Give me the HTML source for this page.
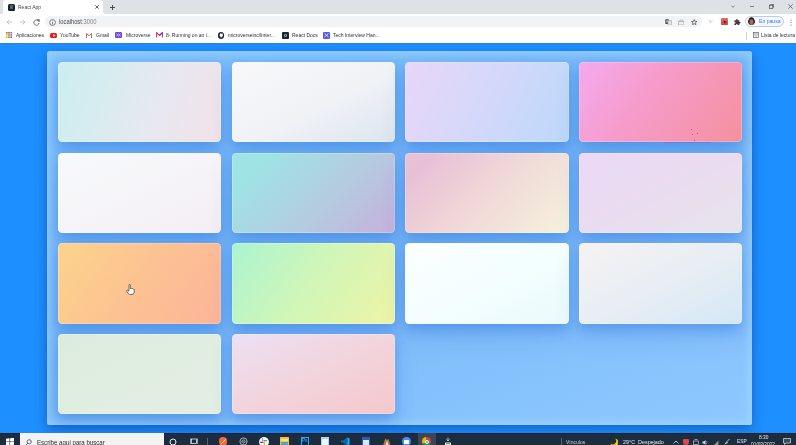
<!DOCTYPE html>
<html><head><meta charset="utf-8">
<style>
*{margin:0;padding:0;box-sizing:border-box}
html,body{width:796px;height:445px;overflow:hidden;background:#1e8fff;font-family:"Liberation Sans",sans-serif}
.abs{position:absolute}
#tabs{left:0;top:0;width:796px;height:14px;background:#dee1e6}
#tab{left:3px;top:0;width:100px;height:14px;background:#fff;border-radius:3px 3px 0 0}
#addr{left:0;top:14px;width:796px;height:15px;background:#fff}
#omni{left:45px;top:16px;width:657px;height:11px;background:#f1f3f4;border-radius:6px}
#bm{left:0;top:29px;width:796px;height:13.6px;background:#fff}
.t{position:absolute;white-space:nowrap;color:#2e3135;line-height:1;transform:scaleY(1.15);transform-origin:0 50%;will-change:transform}
#page{left:0;top:43px;width:796px;height:390px;background:#1e8fff}
#panel{left:47px;top:51px;width:705.2px;height:373.5px;border-radius:2.5px;
  background:linear-gradient(160deg,#7cbffc 0%,#76b8f8 45%,#8fc8ff 100%);
  box-shadow:0 4px 12px rgba(0,40,120,.42), inset 0 0 8px 3px rgba(170,222,255,.55)}
.card{position:absolute;width:163.4px;height:80.4px;border-radius:4.5px;box-shadow:inset 0 0 0 0.8px rgba(255,255,255,.3),0 6px 12px rgba(0,80,210,.24),0 14px 26px rgba(0,70,190,.13)}
#taskbar{left:0;top:432.8px;width:796px;height:13px;background:#1c2d40;border-top:1px solid #132030}
</style></head><body>
<div id="tabs" class="abs"></div>
<div id="tab" class="abs"></div>
<div class="abs" style="left:100px;top:11px;width:6px;height:3px;background:#fff"></div>
<div class="abs" style="left:103px;top:8px;width:6px;height:6px;background:#dee1e6;border-bottom-left-radius:3px"></div>
<div class="abs" style="left:8px;top:3.5px;width:7px;height:7px;background:#20232a;border-radius:1.5px"></div>
<div class="abs" style="left:9.8px;top:5.3px;width:3.6px;height:3.6px;background:#3f6e7c;border-radius:0.5px"></div>
<div class="t" style="left:18px;top:5px;font-size:5px;color:#45484c">React App</div>
<svg class="abs" style="left:94.5px;top:5px" width="4" height="4" viewBox="0 0 4 4"><path d="M0.3 0.3L3.7 3.7M3.7 0.3L0.3 3.7" stroke="#3c4043" stroke-width="0.8"/></svg>
<svg class="abs" style="left:110px;top:4.5px" width="5" height="5" viewBox="0 0 5 5"><path d="M2.5 0V5M0 2.5H5" stroke="#3c4043" stroke-width="0.9"/></svg>
<svg class="abs" style="left:731px;top:4.5px" width="4" height="3" viewBox="0 0 4 3"><path d="M0.2 0.5L2 2.4L3.8 0.5" stroke="#4a4e52" stroke-width="0.6" fill="none"/></svg>
<div class="abs" style="left:749.5px;top:5.8px;width:4.5px;height:0.7px;background:#7a7e83"></div>
<svg class="abs" style="left:768.5px;top:3.8px" width="5" height="5" viewBox="0 0 5 5"><rect x="0.4" y="1.2" width="3.4" height="3.4" stroke="#3c4043" stroke-width="0.65" fill="none"/><path d="M1.2 0.4H4.6V3.8" stroke="#3c4043" stroke-width="0.65" fill="none"/></svg>
<svg class="abs" style="left:788px;top:4px" width="5" height="5" viewBox="0 0 5 5"><path d="M0.3 0.3L4.7 4.7M4.7 0.3L0.3 4.7" stroke="#3c4043" stroke-width="0.65"/></svg>

<div id="addr" class="abs"></div>
<svg class="abs" style="left:6px;top:18.5px" width="7" height="6" viewBox="0 0 7 6"><path d="M6.5 3H1M3.5 0.5L1 3L3.5 5.5" stroke="#b6b9bd" stroke-width="0.8" fill="none"/></svg>
<svg class="abs" style="left:19px;top:18.5px" width="7" height="6" viewBox="0 0 7 6"><path d="M0.5 3H6M3.5 0.5L6 3L3.5 5.5" stroke="#b6b9bd" stroke-width="0.8" fill="none"/></svg>
<svg class="abs" style="left:32.5px;top:18.5px" width="7" height="7" viewBox="0 0 7 7"><path d="M5.6 2.2A2.6 2.6 0 1 0 6 4" stroke="#5f6368" stroke-width="0.9" fill="none"/><path d="M4 0.6H6.3V2.9Z" fill="#5f6368" stroke="#5f6368" stroke-width="0.5"/></svg>
<div id="omni" class="abs"></div>
<svg class="abs" style="left:49px;top:18.5px" width="7" height="7" viewBox="0 0 7 7"><circle cx="3.5" cy="3.5" r="2.9" stroke="#5f6368" stroke-width="0.8" fill="none"/><path d="M3.5 3V5.3" stroke="#5f6368" stroke-width="0.8"/><circle cx="3.5" cy="1.9" r="0.45" fill="#5f6368"/></svg>
<div class="t" style="left:59px;top:19.5px;font-size:5.8px;color:#45484c">localhost<span style="color:#80858a">:3000</span></div>
<svg class="abs" style="left:664.5px;top:18.8px" width="7" height="6.5" viewBox="0 0 7 6.5"><rect x="0.3" y="0.3" width="3.6" height="4.6" rx="0.4" fill="#4a4e52"/><rect x="3" y="1.6" width="3.6" height="4.6" rx="0.4" fill="#e4e6e8" stroke="#8a8e92" stroke-width="0.5"/><path d="M1.1 3.6L2.1 1.2L3 3.6" stroke="#fff" stroke-width="0.5" fill="none"/></svg>
<svg class="abs" style="left:677.8px;top:18.8px" width="6.5" height="6.5" viewBox="0 0 6.5 6.5"><path d="M0.5 2.6H6V6H0.5Z" stroke="#8e9297" stroke-width="0.6" fill="none"/><path d="M1.2 2.6L2 0.8L3.2 1.8L4.4 0.8L5.4 2.6" stroke="#8e9297" stroke-width="0.55" fill="none"/></svg>
<svg class="abs" style="left:691.4px;top:18.8px" width="6.5" height="6.5" viewBox="0 0 7 7"><path d="M3.5 0.6L4.3 2.6L6.4 2.7L4.8 4L5.3 6.2L3.5 5L1.7 6.2L2.2 4L0.6 2.7L2.7 2.6Z" stroke="#3c4043" stroke-width="0.7" fill="none" stroke-linejoin="round"/></svg>
<svg class="abs" style="left:708.3px;top:18.6px" width="6" height="6" viewBox="0 0 6 6"><path d="M0.6 0.6L2.2 5L2.8 3.2L4.6 2.6Z" fill="#d4d6d9"/><path d="M4 0.4V1.4M5.4 1.8H4.6" stroke="#c4c7ca" stroke-width="0.5"/></svg>
<div class="abs" style="left:721px;top:18.4px;width:7px;height:7px;background:linear-gradient(#e86a6a,#cf4545);border-radius:0.8px"></div><svg class="abs" style="left:722.5px;top:19.8px" width="4.5" height="4.5" viewBox="0 0 5 5"><path d="M0.6 0.6L4.2 2.2L2.6 2.7L2 4.3Z" fill="#2a0808"/></svg>
<svg class="abs" style="left:734.3px;top:18.6px" width="6.6" height="6.6" viewBox="1 1 22 22"><path d="M20.5 11H19V7c0-1.1-.9-2-2-2h-4V3.5C13 2.12 11.88 1 10.5 1S8 2.12 8 3.5V5H4c-1.1 0-1.99.9-1.99 2v3.8H3.5c1.49 0 2.7 1.21 2.7 2.7s-1.21 2.7-2.7 2.7H2V20c0 1.1.9 2 2 2h3.8v-1.5c0-1.490 1.21-2.7 2.7-2.7 1.49 0 2.7 1.21 2.7 2.7V22H17c1.1 0 2-.9 2-2v-4h1.5c1.38 0 2.5-1.12 2.5-2.5S21.88 11 20.5 11z" fill="#3c4043"/></svg>
<div class="abs" style="left:745px;top:16px;width:38.5px;height:10.8px;border-radius:6px;border:0.8px solid #b4cdf2;background:#f4f8fe"></div>
<div class="abs" style="left:748.4px;top:17.4px;width:7px;height:8px;border-radius:50%;background:radial-gradient(ellipse at 50% 62%,#a87058 0 28%,#3a2418 48%,#2a1a12 62%,#e6e2e0 72%)"></div>
<div class="t" style="left:759px;top:19px;font-size:5.1px;color:#3f78d6">En pausa</div>
<svg class="abs" style="left:790px;top:18.5px" width="2" height="7" viewBox="0 0 2 7"><circle cx="1" cy="1" r="0.6" fill="#5f6368"/><circle cx="1" cy="3.5" r="0.6" fill="#5f6368"/><circle cx="1" cy="6" r="0.6" fill="#5f6368"/></svg>

<div id="bm" class="abs"></div>
<svg class="abs" style="left:6px;top:32px" width="6" height="6" viewBox="0 0 6 6"><rect x="0" y="0" width="1.6" height="1.6" fill="#ea4335"/><rect x="2.2" y="0" width="1.6" height="1.6" fill="#ea4335"/><rect x="4.4" y="0" width="1.6" height="1.6" fill="#4285f4"/><rect x="0" y="2.2" width="1.6" height="1.6" fill="#fbbc04"/><rect x="2.2" y="2.2" width="1.6" height="1.6" fill="#34a853"/><rect x="4.4" y="2.2" width="1.6" height="1.6" fill="#4285f4"/><rect x="0" y="4.4" width="1.6" height="1.6" fill="#fbbc04"/><rect x="2.2" y="4.4" width="1.6" height="1.6" fill="#34a853"/><rect x="4.4" y="4.4" width="1.6" height="1.6" fill="#ea4335"/></svg>
<div class="t" style="left:16px;top:33px;font-size:5px">Aplicaciones</div>
<div class="abs" style="left:50px;top:32.6px;width:7px;height:5px;background:#e62117;border-radius:1.5px"></div>
<svg class="abs" style="left:52.5px;top:33.8px" width="3" height="3" viewBox="0 0 3 3"><path d="M0.3 0.2L2.6 1.5L0.3 2.8Z" fill="#fff"/></svg>
<div class="t" style="left:60px;top:33px;font-size:5px">YouTube</div>
<svg class="abs" style="left:86px;top:32.6px" width="6" height="5" viewBox="0 0 6 5"><path d="M0.4 4.8V0.6L3 2.6L5.6 0.6V4.8" stroke="#ea4335" stroke-width="0.9" fill="none"/><path d="M0.4 4.8V1.5" stroke="#4285f4" stroke-width="0.9"/><path d="M5.6 4.8V1.5" stroke="#34a853" stroke-width="0.9"/></svg>
<div class="t" style="left:96px;top:33px;font-size:5px">Gmail</div>
<div class="abs" style="left:115px;top:32px;width:7px;height:6px;background:#6b4bd8;border-radius:1px"></div>
<svg class="abs" style="left:116px;top:33px" width="5" height="4" viewBox="0 0 5 4"><path d="M0.5 0.5L2.5 3.5L4.5 0.5M0.5 3.5L2.5 0.5L4.5 3.5" stroke="#e8e0ff" stroke-width="0.5" fill="none"/></svg>
<div class="t" style="left:126px;top:33px;font-size:5px">Microverse</div>
<svg class="abs" style="left:156px;top:32px" width="7" height="6" viewBox="0 0 7 6"><path d="M0.6 5.6V0.6L3.5 3.5L6.4 0.6V5.6" stroke="#d6336c" stroke-width="1.1" fill="none"/><path d="M3.5 3.5L6.4 0.6" stroke="#5b3fd9" stroke-width="1.1"/></svg>
<div class="t" style="left:166px;top:33px;font-size:5px">8- Running on an i...</div>
<div class="abs" style="left:217.5px;top:32px;width:6.5px;height:6.5px;border-radius:50%;background:#24292f"></div>
<svg class="abs" style="left:218.5px;top:33px" width="4.5" height="4.5" viewBox="0 0 5 5"><path d="M1.5 4.6V3.6C1 3.5 0.6 3 0.7 2.2C0.8 1.5 1.1 1.2 1.1 1.2C1 0.9 1.1 0.5 1.2 0.4C1.6 0.5 1.9 0.7 2.1 0.8H2.9C3.1 0.7 3.4 0.5 3.8 0.4C3.9 0.5 4 0.9 3.9 1.2C3.9 1.2 4.2 1.5 4.3 2.2C4.4 3 4 3.5 3.5 3.6V4.6Z" fill="#fff"/></svg>
<div class="t" style="left:228px;top:33px;font-size:5px">microverseinc/linter...</div>
<div class="abs" style="left:282px;top:32px;width:7px;height:6.5px;background:#20232a;border-radius:1px"></div>
<div class="abs" style="left:284px;top:34px;width:3px;height:2.5px;border:0.5px solid #61dafb;border-radius:50%;opacity:.8"></div>
<div class="t" style="left:292px;top:33px;font-size:5px">React Docs</div>
<div class="abs" style="left:323px;top:32px;width:7px;height:6.5px;background:#5b5be8;border-radius:1px"></div>
<svg class="abs" style="left:324px;top:33px" width="5" height="4.5" viewBox="0 0 5 4.5"><path d="M0.5 0.5L4.5 4M4.5 0.5L0.5 4" stroke="#fff" stroke-width="0.7"/></svg>
<div class="t" style="left:333px;top:33px;font-size:5px">Tech Interview Han...</div>
<div class="abs" style="left:746px;top:31.5px;width:0.7px;height:8px;background:#d0d2d5"></div>
<svg class="abs" style="left:752.5px;top:32px" width="6" height="6" viewBox="0 0 6 6"><rect x="0.4" y="0.4" width="5.2" height="5.2" stroke="#5f6368" stroke-width="0.7" fill="none"/><path d="M3 0.4V5.6M1.2 1.8H2.3M1.2 3H2.3M3.7 1.8H4.8M3.7 3H4.8" stroke="#5f6368" stroke-width="0.5"/></svg>
<div class="t" style="left:761px;top:33px;font-size:5px">Lista de lectura</div>

<div id="page" class="abs"></div>
<div class="abs" style="left:0;top:42.6px;width:796px;height:1px;background:#3180d8"></div>
<div id="panel" class="abs">
<div class="card" style="left:10.7px;top:11.0px;background:linear-gradient(108deg,#ccedf0 0%,#d8ecf0 30%,#e8e8f0 62%,#f2e2e8 100%)"></div>
<div class="card" style="left:184.5px;top:11.0px;background:linear-gradient(to bottom right,#f8f8fa 0%,#f0f2f6 55%,#dce5ef 100%)"></div>
<div class="card" style="left:358.3px;top:11.0px;background:linear-gradient(115deg,#e8d6f8 0%,#d6d8fa 45%,#bcd8fa 100%)"></div>
<div class="card" style="left:532.1px;top:11.0px;background:linear-gradient(125deg,#f4aaee 0%,#f69ccc 40%,#f5909e 100%)"></div>
<div class="card" style="left:10.7px;top:101.6px;background:linear-gradient(to bottom right,#f6fafc 0%,#f6f4f8 50%,#f4eef4 100%)"></div>
<div class="card" style="left:184.5px;top:101.6px;background:linear-gradient(135deg,#a2e2e6 0%,#9ee4e4 15%,#b4cce0 58%,#c6b0dc 100%)"></div>
<div class="card" style="left:358.3px;top:101.6px;background:linear-gradient(135deg,#e8c2d6 0%,#e8c0d6 12%,#f0d8d8 50%,#f6f2dc 100%)"></div>
<div class="card" style="left:532.1px;top:101.6px;background:linear-gradient(to bottom right,#ecd8f6 0%,#eadcf0 50%,#e6e4ec 100%)"></div>
<div class="card" style="left:10.7px;top:192.2px;background:linear-gradient(125deg,#fbd48c 0%,#fcc292 50%,#fdb49a 100%)"></div>
<div class="card" style="left:184.5px;top:192.2px;background:linear-gradient(125deg,#aaf4d0 0%,#d0f6b8 48%,#eef4a6 100%)"></div>
<div class="card" style="left:358.3px;top:192.2px;background:linear-gradient(to bottom right,#fcffff 0%,#f4feff 50%,#eafafb 100%)"></div>
<div class="card" style="left:532.1px;top:192.2px;background:linear-gradient(to bottom right,#f6f2f2 0%,#e8eef4 50%,#d4e7f6 100%)"></div>
<div class="card" style="left:10.7px;top:282.8px;background:linear-gradient(to bottom right,#dcecdc 0%,#e0eee0 50%,#e4eee4 100%)"></div>
<div class="card" style="left:184.5px;top:282.8px;background:linear-gradient(to bottom right,#ece0f4 0%,#f2d4dc 50%,#f4c8cc 100%)"></div>
</div>
<div id="taskbar" class="abs"></div>
<svg class="abs" style="left:5.5px;top:438px" width="8" height="7" viewBox="0 0 8 7"><path d="M0 0.8L3.5 0.3V3.2H0ZM4.1 0.2L8 -0.3V3.2H4.1ZM0 3.8H3.5V7H0ZM4.1 3.8H8V7H4.1Z" fill="#fff"/></svg>
<div class="abs" style="left:20px;top:433px;width:143.5px;height:12px;background:#f3f3f3"></div>
<svg class="abs" style="left:25px;top:438.5px" width="7" height="7" viewBox="0 0 7 7"><circle cx="4.2" cy="2.8" r="2.1" stroke="#333" stroke-width="0.7" fill="none"/><path d="M2.7 4.3L0.5 6.5" stroke="#333" stroke-width="0.8"/></svg>
<div class="t" style="left:37px;top:439.5px;font-size:6.1px;color:#2a2a2a">Escribe aquí para buscar</div>
<svg class="abs" style="left:169px;top:437.5px" width="8" height="8" viewBox="0 0 8 8"><circle cx="4" cy="4" r="3" stroke="#fff" stroke-width="0.9" fill="none"/></svg>
<svg class="abs" style="left:189.5px;top:438px" width="8" height="7" viewBox="0 0 8 7"><rect x="1.5" y="1" width="5" height="4.5" stroke="#fff" stroke-width="0.7" fill="none"/><path d="M0.4 0.5V6M7.6 0.5V6" stroke="#fff" stroke-width="0.6"/></svg>
<div class="abs" style="left:207px;top:438px;width:0.6px;height:7px;background:#5a6470"></div>
<div class="abs" style="left:218.5px;top:437px;width:8.5px;height:8.5px;border-radius:50%;background:#f26b3a"></div>
<svg class="abs" style="left:219.5px;top:438px" width="7" height="7" viewBox="0 0 7 7"><path d="M1.5 5.5L5.5 1.5" stroke="#fff" stroke-width="0.8"/></svg>
<svg class="abs" style="left:238.5px;top:437px" width="9" height="9" viewBox="0 0 9 9"><circle cx="4.5" cy="4.5" r="3.6" stroke="#c8ccd0" stroke-width="0.8" fill="none"/><circle cx="4.5" cy="4.5" r="1.6" stroke="#c8ccd0" stroke-width="0.6" fill="none"/><path d="M4.5 0.9V8.1M0.9 4.5H8.1" stroke="#9aa0a6" stroke-width="0.4"/></svg>
<div class="abs" style="left:258.5px;top:436.5px;width:10px;height:10px;border-radius:50%;background:#f4f4f4"></div>
<svg class="abs" style="left:260px;top:438px" width="7" height="7" viewBox="0 0 7 7"><path d="M2.6 0.5V3" stroke="#36c5f0" stroke-width="1.1" stroke-linecap="round"/><path d="M6.5 2.6H4" stroke="#2eb67d" stroke-width="1.1" stroke-linecap="round"/><path d="M4.4 6.5V4" stroke="#ecb22e" stroke-width="1.1" stroke-linecap="round"/><path d="M0.5 4.4H3" stroke="#e01e5a" stroke-width="1.1" stroke-linecap="round"/></svg>
<div class="abs" style="left:279.5px;top:437px;width:9.5px;height:8.5px;background:#f0c040;border-radius:0.5px"></div>
<div class="abs" style="left:280.5px;top:438.5px;width:7.5px;height:2px;background:#ffe48a"></div>
<div class="abs" style="left:281px;top:441.5px;width:6.5px;height:3.5px;background:#5aa0c8"></div>
<div class="abs" style="left:300.5px;top:437px;width:8.5px;height:8.5px;background:#0b2a44;border:0.6px solid #31a8ff"></div>
<div class="t" style="left:302px;top:439px;font-size:4.5px;color:#31a8ff;font-weight:bold">Ps</div>
<div class="abs" style="left:321px;top:437px;width:8px;height:8px;background:#a8d4f0"></div>
<div class="abs" style="left:322px;top:439px;width:6px;height:6px;background:#eaf6fc"></div>
<svg class="abs" style="left:341px;top:437px" width="9" height="9" viewBox="0 0 9 9"><path d="M6.5 0.5L8.5 1.5V7.5L6.5 8.5L1.5 4.5L0.5 5.5V3.5L1.5 4.5Z" fill="#23a9f2"/><path d="M6.5 0.5V8.5L2 4.5Z" fill="#0065a9"/><path d="M0.5 3.5L6.5 8" stroke="#007acc" stroke-width="1"/></svg>
<div class="abs" style="left:362px;top:437px;width:8px;height:8px;background:#2b5fa8"></div>
<div class="abs" style="left:363px;top:439.5px;width:6px;height:5.5px;background:#d8e6f4"></div>
<svg class="abs" style="left:382px;top:437px" width="9" height="9" viewBox="0 0 9 9"><path d="M1 8.5L3.5 1L5 3.5L6.5 1.5L8.5 8.5Z" fill="#b07850"/><path d="M3.5 8.5L5 3.5L6.5 8.5Z" fill="#f0e0d0"/></svg>
<div class="abs" style="left:402px;top:437px;width:9px;height:9px;border-radius:50%;background:#4a8cff"></div>
<div class="abs" style="left:404px;top:440px;width:5px;height:3.5px;background:#fff;border-radius:0.5px"></div>
<div class="abs" style="left:417.5px;top:433px;width:18px;height:12px;background:#3d4754"></div>
<div class="abs" style="left:422px;top:437px;width:9px;height:9px;border-radius:50%;background:conic-gradient(#db4437 0 33%,#0f9d58 0 66%,#f4b400 0)"></div>
<div class="abs" style="left:424.5px;top:439.5px;width:4px;height:4px;border-radius:50%;background:#4285f4;border:0.7px solid #fff"></div>
<svg class="abs" style="left:443.5px;top:437px" width="8" height="9" viewBox="0 0 8 9"><path d="M4 0.5V4M2.5 2.5L4 4L5.5 2.5" stroke="#e8f0f0" stroke-width="0.7" fill="none"/><rect x="1" y="5.5" width="6" height="3.5" fill="#e8f0f0"/><rect x="2" y="6.2" width="4" height="1" fill="#3da08a"/></svg>
<div class="abs" style="left:561px;top:438px;width:0.6px;height:7px;background:#5a6470"></div>
<div class="t" style="left:566px;top:439.5px;font-size:5px;color:#d0d4d8">Vínculos</div>
<svg class="abs" style="left:610px;top:437.5px" width="8" height="8" viewBox="0 0 8 8"><path d="M5 0.5A4 4 0 1 1 0.5 5.5A3.3 3.3 0 0 0 5 0.5Z" fill="#f5c518"/></svg>
<div class="t" style="left:622.5px;top:439.5px;font-size:5.4px;color:#e8eaec">29°C&nbsp; Despejado</div>
<svg class="abs" style="left:672.5px;top:440px" width="6" height="4" viewBox="0 0 6 4"><path d="M0.5 3.5L3 1L5.5 3.5" stroke="#fff" stroke-width="0.7" fill="none"/></svg>
<div class="abs" style="left:683px;top:439px;width:5.5px;height:6px;border-radius:1px 1px 3px 3px;background:#e04848"></div>
<svg class="abs" style="left:693px;top:438.5px" width="6" height="7" viewBox="0 0 6 7"><rect x="0.5" y="2" width="5" height="3.5" stroke="#dde" stroke-width="0.6" fill="none"/><path d="M1.5 0.5H4.5M3 5.5V7" stroke="#dde" stroke-width="0.6"/></svg>
<svg class="abs" style="left:702px;top:438.5px" width="6" height="7" viewBox="0 0 6 7"><path d="M0.5 2.5H2L3.5 1V6L2 4.5H0.5Z" fill="#dde"/><path d="M4.5 2.2Q5.5 3.5 4.5 4.8" stroke="#dde" stroke-width="0.5" fill="none"/></svg>
<svg class="abs" style="left:712.5px;top:438.5px" width="6" height="7" viewBox="0 0 6 7"><path d="M0.5 6.5L5.5 1.5V6.5Z" fill="#8a929a"/></svg>
<svg class="abs" style="left:724px;top:438px" width="7" height="7" viewBox="0 0 7 7"><path d="M1 6.5L2.5 4L5.5 1M1.5 5.5L4 4.5" stroke="#dde" stroke-width="0.8" fill="none"/></svg>
<div class="t" style="left:736.5px;top:439.5px;font-size:4.8px;color:#e8eaec">ESP</div>
<div class="t" style="left:758.5px;top:435.7px;font-size:4.8px;color:#e8eaec">8:30</div>
<div class="t" style="left:751px;top:442.5px;font-size:4.8px;color:#e8eaec">01/03/2022</div>
<svg class="abs" style="left:783px;top:438px" width="8" height="7" viewBox="0 0 8 7"><path d="M0.5 0.5H7.5V5H3L1.5 6.5V5H0.5Z" stroke="#fff" stroke-width="0.6" fill="#fff" fill-opacity=".15"/></svg>
<svg class="abs" style="left:125.5px;top:283.5px" width="9" height="11" viewBox="0 0 9 11"><path d="M3 1.2Q3 0.4 3.7 0.4Q4.4 0.4 4.4 1.2V4.6Q5 4.2 5.6 4.6Q6.3 4.3 6.9 4.9Q7.8 4.8 8.2 5.6V8Q8.2 10.3 6 10.5H4.3Q3.2 10.5 2.4 9.6L0.8 7.2Q0.4 6.3 1.2 6L3 7.2Z" fill="#fff" stroke="#5a4630" stroke-width="0.8"/></svg>
<div class="abs" style="left:664px;top:142px;width:47px;height:0.8px;background:rgba(120,90,210,.35)"></div>
<div class="abs" style="left:691px;top:128.7px;width:0.8px;height:0.8px;background:#c0507a"></div>
<div class="abs" style="left:692px;top:133.5px;width:0.8px;height:0.8px;background:#c0507a"></div>
<div class="abs" style="left:697px;top:132.8px;width:0.8px;height:0.8px;background:#c0507a"></div>
<div class="abs" style="left:694px;top:140px;width:0.8px;height:0.8px;background:#c0507a"></div>
</body></html>
